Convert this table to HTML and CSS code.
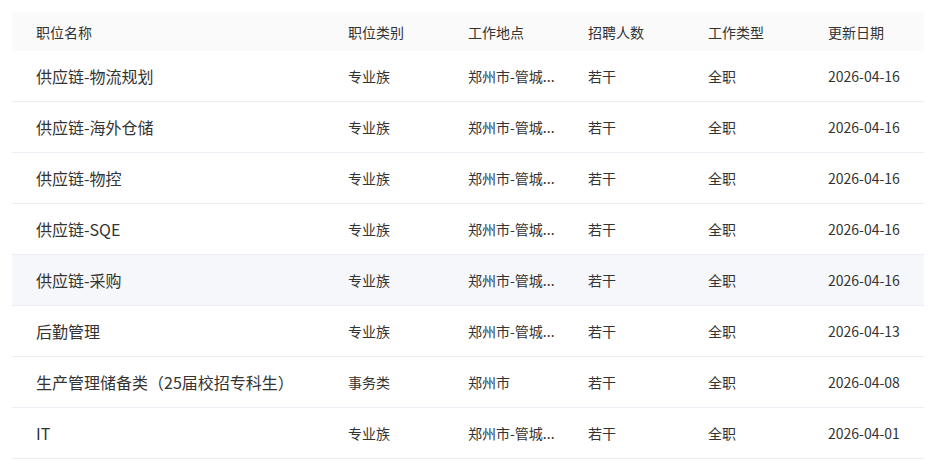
FILE: index.html
```html
<!DOCTYPE html>
<html lang="zh-CN">
<head>
<meta charset="utf-8">
<title>职位列表</title>
<link rel="stylesheet" href="styles.css">
</head>
<body>
<div class="jobs">
  <div class="row head">
    <div class="cell name">职位名称</div>
    <div class="cell">职位类别</div>
    <div class="cell">工作地点</div>
    <div class="cell">招聘人数</div>
    <div class="cell">工作类型</div>
    <div class="cell">更新日期</div>
  </div>
  <div class="row">
    <div class="cell name">供应链-物流规划</div>
    <div class="cell">专业族</div>
    <div class="cell" title="郑州市-管城回族区">郑州市-管城...</div>
    <div class="cell">若干</div>
    <div class="cell">全职</div>
    <div class="cell">2026-04-16</div>
  </div>
  <div class="row">
    <div class="cell name">供应链-海外仓储</div>
    <div class="cell">专业族</div>
    <div class="cell" title="郑州市-管城回族区">郑州市-管城...</div>
    <div class="cell">若干</div>
    <div class="cell">全职</div>
    <div class="cell">2026-04-16</div>
  </div>
  <div class="row">
    <div class="cell name">供应链-物控</div>
    <div class="cell">专业族</div>
    <div class="cell" title="郑州市-管城回族区">郑州市-管城...</div>
    <div class="cell">若干</div>
    <div class="cell">全职</div>
    <div class="cell">2026-04-16</div>
  </div>
  <div class="row">
    <div class="cell name">供应链-SQE</div>
    <div class="cell">专业族</div>
    <div class="cell" title="郑州市-管城回族区">郑州市-管城...</div>
    <div class="cell">若干</div>
    <div class="cell">全职</div>
    <div class="cell">2026-04-16</div>
  </div>
  <div class="row hover">
    <div class="cell name">供应链-采购</div>
    <div class="cell">专业族</div>
    <div class="cell" title="郑州市-管城回族区">郑州市-管城...</div>
    <div class="cell">若干</div>
    <div class="cell">全职</div>
    <div class="cell">2026-04-16</div>
  </div>
  <div class="row">
    <div class="cell name">后勤管理</div>
    <div class="cell">专业族</div>
    <div class="cell" title="郑州市-管城回族区">郑州市-管城...</div>
    <div class="cell">若干</div>
    <div class="cell">全职</div>
    <div class="cell">2026-04-13</div>
  </div>
  <div class="row">
    <div class="cell name">生产管理储备类（25届校招专科生）</div>
    <div class="cell">事务类</div>
    <div class="cell">郑州市</div>
    <div class="cell">若干</div>
    <div class="cell">全职</div>
    <div class="cell">2026-04-08</div>
  </div>
  <div class="row">
    <div class="cell name">IT</div>
    <div class="cell">专业族</div>
    <div class="cell" title="郑州市-管城回族区">郑州市-管城...</div>
    <div class="cell">若干</div>
    <div class="cell">全职</div>
    <div class="cell">2026-04-01</div>
  </div>
</div>
</body>
</html>
```

FILE: styles.css
```css
html, body {
  margin: 0;
  padding: 0;
  background: #ffffff;
}
body {
  font-family: "Microsoft YaHei", "Noto Sans CJK SC", "Noto Sans", sans-serif;
  color: #333333;
  padding: 12px 13px 0 12px;
}
.jobs {
  width: 912px;
}
.row {
  display: grid;
  grid-template-columns: 312px 120px 120px 120px 120px 120px;
  height: 50px;
  align-items: center;
  border-bottom: 1px solid #ebeef5;
  font-size: 14px;
}
.row.head {
  height: 39px;
  background: #fafafa;
  border-bottom: none;
}
.row.hover {
  background: #f5f7fa;
}
.cell {
  padding-left: 24px;
  white-space: nowrap;
  line-height: 22px;
}
.row .name {
  font-size: 16px;
}
.row.head .name {
  font-size: 14px;
}
```
